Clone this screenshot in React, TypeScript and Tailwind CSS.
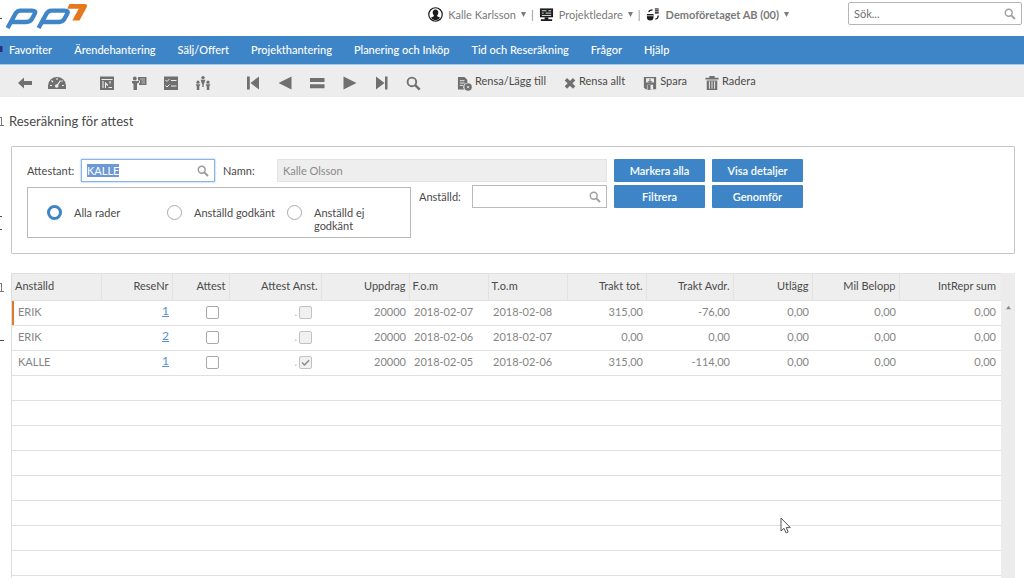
import { useEffect, useRef, useState } from "react";
import type { ReactNode } from "react";

const menu = ["Favoriter", "Ärendehantering", "Sälj/Offert", "Projekthantering", "Planering och Inköp", "Tid och Reseräkning", "Frågor", "Hjälp"];

type Row = { name: string; nr: string; approved: boolean; from: string; to: string; total: string; deduction: string };

const rows: Row[] = [
  { name: "ERIK", nr: "1", approved: false, from: "2018-02-07", to: "2018-02-08", total: "315,00", deduction: "-76,00" },
  { name: "ERIK", nr: "2", approved: false, from: "2018-02-06", to: "2018-02-07", total: "0,00", deduction: "0,00" },
  { name: "KALLE", nr: "1", approved: true, from: "2018-02-05", to: "2018-02-06", total: "315,00", deduction: "-114,00" },
];

const emptyRows = Array.from({ length: 12 }, (_, i) => i);

function Icon({ children, box = 16, className = "size-4" }: { children: ReactNode; box?: number; className?: string }) {
  return (
    <svg viewBox={`0 0 ${box} ${box}`} className={`${className} shrink-0`} fill="currentColor" aria-hidden="true">
      {children}
    </svg>
  );
}

function SearchIcon({ className }: { className: string }) {
  return (
    <Icon className={className}>
      <circle cx="6.3" cy="6.3" r="4.6" fill="none" stroke="currentColor" strokeWidth="2" />
      <path d="M9.8 9.8 14.6 14.6" stroke="currentColor" strokeWidth="2.6" />
    </Icon>
  );
}

function Logo() {
  return (
    <svg viewBox="0 0 84 26" className="h-[26px] w-[84px]" role="img" aria-label="pp7">
      <g fill="none" stroke="#3f85c8" strokeWidth="4.4" strokeLinejoin="round">
        <path d="M2.6 25 10.4 10.8Q12.2 7.6 15.6 7.6H27Q31.5 7.6 29.6 11L27 15.8Q25.2 19 21.6 19H5.6" />
        <path d="M33.6 25 41.4 10.8Q43.2 7.6 46.6 7.6H59.5Q64 7.6 62.1 11L59.5 15.8Q57.7 19 54.1 19H36.6" />
      </g>
      <path d="M64.5 1H79.5Q83 1 81.7 4.2L74.5 17.5H67.3L73.7 5.8H62.2Z" fill="#e5781e" />
    </svg>
  );
}

function ToolButton({ label, children }: { label: string; children: ReactNode }) {
  return (
    <button type="button" aria-label={label} className="flex h-6 w-8 items-center justify-center">
      {children}
    </button>
  );
}

function TextButton({ label, children }: { label: string; children: ReactNode }) {
  return (
    <button type="button" className="flex items-center gap-[3px] whitespace-nowrap">
      {children}
      <span className="pb-[5px] text-[#4a4a4a]">{label}</span>
    </button>
  );
}

function Dropdown({ label, bold, icon }: { label: string; bold?: boolean; icon: ReactNode }) {
  return (
    <button type="button" className="flex items-center gap-[5px] whitespace-nowrap text-[#7a7a7a]">
      <span className="text-[#1c1c1c]">{icon}</span>
      <span className={bold ? "font-bold" : ""}>{label}</span>
      <Icon box={6} className="size-[5px]">
        <path d="M0 0H6L3 6Z" />
      </Icon>
    </button>
  );
}

function ActionButton({ label }: { label: string }) {
  return (
    <button type="button" className="h-[23px] w-[91px] rounded-[1px] bg-[#3e85c7] pb-px font-semibold text-white">
      {label}
    </button>
  );
}

function Tick({ label, disabled, initial }: { label: string; disabled?: boolean; initial?: boolean }) {
  const [checked, setChecked] = useState(Boolean(initial));
  return (
    <span className="inline-grid align-middle">
      <input
        type="checkbox"
        aria-label={label}
        checked={checked}
        disabled={disabled}
        onChange={(e) => setChecked(e.target.checked)}
        className="col-start-1 row-start-1 size-[13px] appearance-none rounded-[2px] border border-[#a9a9a9] bg-white disabled:border-[#c2c2c2] disabled:bg-[#f0f0f0]"
      />
      {checked && (
        <svg viewBox="0 0 13 13" className="pointer-events-none col-start-1 row-start-1 size-[13px]" fill="none" stroke="#8c8c8c" strokeWidth="1.5" aria-hidden="true">
          <path d="M3 6.5 5.5 9 10 4.2" />
        </svg>
      )}
    </span>
  );
}

const th = "border-r border-[#e2e2e2] px-[3px] pb-[3px] font-normal last:border-r-0 last:pr-[5px]";
const td = "pr-[3px] pb-1 text-right last:pr-[5px]";

export default function App() {
  const attestant = useRef<HTMLInputElement>(null);
  const [filter, setFilter] = useState("Alla rader");

  useEffect(() => {
    attestant.current?.focus();
    attestant.current?.select();
  }, []);

  return (
    <div className="relative flex h-screen flex-col overflow-hidden bg-white font-['Lato',sans-serif] text-[11px] leading-[13px] text-[#4a4a4a]">
      <header className="flex h-9 shrink-0 items-start pr-[2px] pl-[5px]">
        <a href="#start" className="mt-[3px]"><Logo /></a>
        <div className="ml-auto flex h-[28px] items-center gap-[5px] text-[#8a8a8a]">
          <Dropdown
            label="Kalle Karlsson"
            icon={
              <Icon className="size-[15px]">
                <circle cx="8" cy="8" r="7.2" fill="none" stroke="currentColor" strokeWidth="1.3" />
                <path d="M8 2.6c2 0 3 1.4 3 3.3 0 1.2-.5 2.3-1.2 2.9v1.1l3.2 1.5A6 6 0 0 1 8 14a6 6 0 0 1-5-2.6l3.2-1.5V8.8C5.5 8.2 5 7.1 5 5.9 5 4 6 2.6 8 2.6Z" />
              </Icon>
            }
          />
          <span>|</span>
          <Dropdown
            label="Projektledare"
            icon={
              <Icon className="size-[15px]">
                <path d="M1 1.5H15V11H1Z" />
                <path d="M6 11H10V13H14V15H2V13H6Z" />
                <path d="M3 4H8M10 4H13M3 6.5H5M7 6.5H13M3 9H13" stroke="#fff" strokeWidth=".9" />
              </Icon>
            }
          />
          <span>|</span>
          <Dropdown
            label="Demoföretaget AB (00)"
            bold
            icon={
              <Icon className="size-[15px]">
                <path d="M9.5 1.5H13.5V7H9.5Z" />
                <path d="M9.5 3H13.5M9.5 5H13.5" stroke="#fff" strokeWidth=".7" />
                <path d="M1 7.5H8V11Q8 14.5 4.5 14.5T1 11Z" />
                <path d="M1 9.3H8" stroke="#fff" strokeWidth=".8" />
                <path d="M3 5.5Q3.5 3 7 3M13 9Q13 12.5 10 13" fill="none" stroke="currentColor" strokeWidth="1.3" />
              </Icon>
            }
          />
        </div>
        <label className="mt-[2px] ml-[59px] flex h-[23px] w-[174px] items-center rounded-[2px] border border-[#b5b5b5] px-[5px]">
          <input type="search" aria-label="Sök" placeholder="Sök..." className="min-w-0 flex-1 outline-none placeholder:text-[#6f6f6f]" />
          <span className="text-[#a0a0a0]"><SearchIcon className="size-3" /></span>
        </label>
      </header>

      <nav className="flex h-[29px] shrink-0 items-center gap-[22px] border-b border-[#a9c7e4] bg-[#3e85c7] pl-[9px] font-medium whitespace-nowrap text-white">
        {menu.map((item) => (
          <a key={item} href="#meny" className="pb-[2px]">{item}</a>
        ))}
      </nav>

      <div className="flex h-8 shrink-0 items-center border-t-3 border-[#e9f0f6] bg-[#ededed] pt-px pl-[9px] text-[#707070]">
        <div className="flex gap-[18px]">
          <div className="flex">
            <ToolButton label="Tillbaka">
              <Icon><path d="M1 8 7 2.5V6H15V10H7V13.5Z" /></Icon>
            </ToolButton>
            <ToolButton label="Översikt">
              <Icon box={18} className="size-[18px]">
                <path d="M0 15V11.5A9 8.5 0 0 1 18 11.5V15Z" />
                <path d="M2 11.5H4M3.5 6.5 5 8M9 4V6M14.5 6.5 13.5 7.5M16 11.5H14" stroke="#ededed" strokeWidth="1.1" />
                <path d="M8.5 12.5 12.5 6.5" stroke="#ededed" strokeWidth="1.3" />
                <circle cx="8.7" cy="12" r="1.8" fill="#ededed" />
              </Icon>
            </ToolButton>
          </div>
          <div className="flex">
            <ToolButton label="Projekt">
              <Icon>
                <path d="M1 1.5H15V15H1Z" />
                <path d="M2.5 4.5H13.5M4 6V13M6.5 13V8L9 10.5M11 6V8.5M9.5 12.5H13" stroke="#ededed" strokeWidth="1.1" fill="none" />
              </Icon>
            </ToolButton>
            <ToolButton label="Presentation">
              <Icon>
                <circle cx="3.8" cy="3.5" r="1.9" />
                <path d="M1 6H8V7.5L6 8.5V15H2.5V9L1 8Z" />
                <path d="M7 2H15.5V10H8V8.5L9 7.5V5.5H7Z" />
                <path d="M9 4H14M10.5 6H14M10.5 8H14" stroke="#ededed" strokeWidth=".6" />
              </Icon>
            </ToolButton>
            <ToolButton label="Checklista">
              <Icon>
                <path d="M1 1.5H15V15H1Z" />
                <path d="M2.5 5 4 6.5 6.5 4M8 5.5H13.5M2.5 10.5 4 12 6.5 9.5M8 11H13.5" stroke="#ededed" strokeWidth="1" fill="none" />
              </Icon>
            </ToolButton>
            <ToolButton label="Resurser">
              <Icon>
                <circle cx="8" cy="2.6" r="1.7" />
                <path d="M5.6 4.8H10.4L9 9H7Z" />
                <circle cx="3" cy="7.2" r="1.6" />
                <path d="M.6 9.3H5.4L4.3 11.5V15H1.8V11.5Z" />
                <circle cx="13" cy="7.2" r="1.6" />
                <path d="M10.6 9.3H15.4L14.3 11.5V15H11.8V11.5ZM7.3 9H8.7V12H7.3Z" />
              </Icon>
            </ToolButton>
          </div>
          <div className="flex">
            <ToolButton label="Första">
              <Icon><path d="M2 1.5H4.8V14.5H2ZM14 1.5V14.5L5.5 8Z" /></Icon>
            </ToolButton>
            <ToolButton label="Föregående">
              <Icon><path d="M14.5 1.5V14.5L1.5 8Z" /></Icon>
            </ToolButton>
            <ToolButton label="Lista">
              <Icon><path d="M1 3H15.5V7H1ZM1 9.2H15.5V13.2H1Z" /></Icon>
            </ToolButton>
            <ToolButton label="Nästa">
              <Icon><path d="M2.5 1.5V14.5L15.5 8Z" /></Icon>
            </ToolButton>
            <ToolButton label="Sista">
              <Icon><path d="M3 1.5V14.5L11.5 8ZM12 1.5H14.5V14.5H12Z" /></Icon>
            </ToolButton>
            <ToolButton label="Sök post"><SearchIcon className="size-[15px]" /></ToolButton>
          </div>
        </div>
        <div className="ml-[28px] flex gap-[18px]">
          <TextButton label="Rensa/Lägg till">
            <Icon className="size-[15px]">
              <path d="M1 1H8L11 4V7.5A4 4 0 0 0 8 14.5H1Z" />
              <path d="M3 5H8M3 7.5H8M3 10H6.5" stroke="#ededed" strokeWidth="1" />
              <circle cx="11.8" cy="11.8" r="4" />
              <path d="M10.5 10.5 13.1 13.1M13.1 10.5 10.5 13.1" stroke="#ededed" strokeWidth=".8" />
            </Icon>
          </TextButton>
          <TextButton label="Rensa allt">
            <Icon className="size-3"><path d="M2.5 3 13.5 14M13.5 3 2.5 14" stroke="currentColor" strokeWidth="4.4" /></Icon>
          </TextButton>
          <TextButton label="Spara">
            <Icon className="size-[14px]">
              <path d="M1 1H15V15H3L1 13Z" />
              <path d="M3.5 2.5H12.5V7.5H3.5ZM4.5 10H11.5V15H4.5Z" fill="#ededed" />
              <path d="M8 3.5V8M5.5 6.5H10.5M5.8 11H8V15H5.8Z" stroke="currentColor" strokeWidth="1.2" />
            </Icon>
          </TextButton>
          <TextButton label="Radera">
            <Icon className="size-[14px]">
              <path d="M5 0H11V2H15.5V4H.5V2H5ZM2 5H14V16H2Z" />
              <path d="M5 6V14.5M8 6V14.5M11 6V14.5" stroke="#ededed" strokeWidth="1.1" />
            </Icon>
          </TextButton>
        </div>
      </div>

      <main className="flex min-h-0 flex-1 flex-col pr-[9px] pl-[11px]">
        <h1 className="mt-[15px] -ml-[2px] text-[13px] leading-[18px]">Reseräkning för attest</h1>

        <form className="mt-4 flex h-[108px] shrink-0 items-start gap-[7px] rounded-[1px] border border-[#c6c6c6] pt-3 pl-[15px]">
          <div className="w-[580px] shrink-0">
            <div className="flex h-[23px] items-center">
              <label htmlFor="attestant" className="w-[54px]">Attestant:</label>
              <span className="flex h-[23px] w-[134px] items-center border border-[#8ab4e6] px-[5px] shadow-[0_0_2px_#8ab4e6]">
                <input id="attestant" ref={attestant} defaultValue="KALLE" className="min-w-0 flex-1 caret-transparent outline-none selection:bg-[#6c98d4] selection:text-white" />
                <span className="text-[#9a9a9a]"><SearchIcon className="size-3" /></span>
              </span>
              <label htmlFor="namn" className="ml-2 w-[54px]">Namn:</label>
              <input id="namn" readOnly value="Kalle Olsson" className="h-[23px] min-w-0 flex-1 border border-[#e2e2e2] bg-[#eeeeee] px-[5px] text-[#8a8a8a] outline-none" />
            </div>
            <div className="mt-[3px] flex items-start">
              <fieldset aria-label="Urval" className="mt-[2px] grid h-[51px] w-[384px] shrink-0 grid-cols-[120px_120px_1fr] border border-[#b9b9b9] pt-[17px] pl-[19px]">
                {["Alla rader", "Anställd godkänt", "Anställd ej godkänt"].map((option) => (
                  <label key={option} className="flex items-start gap-3">
                    <input
                      type="radio"
                      name="urval"
                      checked={filter === option}
                      onChange={() => setFilter(option)}
                      className="size-[15px] shrink-0 appearance-none rounded-full border border-[#a9a9a9] bg-white checked:border-[3px] checked:border-[#3e85c7]"
                    />
                    <span className="mt-px max-w-[84px]">{option}</span>
                  </label>
                ))}
              </fieldset>
              <label htmlFor="anstalld" className="mt-[5px] ml-2 w-[53px] shrink-0">Anställd:</label>
              <span className="flex h-[23px] min-w-0 flex-1 items-center border border-[#b9b9b9] px-[5px]">
                <input id="anstalld" className="min-w-0 flex-1 outline-none" />
                <span className="text-[#a0a0a0]"><SearchIcon className="size-3" /></span>
              </span>
            </div>
          </div>
          <div className="grid grid-cols-[91px_91px] gap-x-[7px] gap-y-[3px]">
            <ActionButton label="Markera alla" />
            <ActionButton label="Visa detaljer" />
            <ActionButton label="Filtrera" />
            <ActionButton label="Genomför" />
          </div>
        </form>

        <section className="mt-[19px] flex min-h-0 flex-1 overflow-hidden border-l border-[#dcdcdc]">
          <table className="min-w-0 flex-1 table-fixed border-collapse self-start">
            <colgroup>
              <col className="w-[89px]" />
              <col className="w-[71px]" />
              <col className="w-[57px]" />
              <col className="w-[92px]" />
              <col className="w-[88px]" />
              <col className="w-[79px]" />
              <col className="w-[79px]" />
              <col className="w-[79px]" />
              <col className="w-[87px]" />
              <col className="w-[79px]" />
              <col className="w-[87px]" />
              <col />
            </colgroup>
            <thead>
              <tr className="h-[27px] border-y border-[#e0e0e0] bg-[#eeeeee]">
                <th className={`${th} text-left`}>Anställd</th>
                <th className={`${th} text-right`}>ReseNr</th>
                <th className={`${th} text-right`}>Attest</th>
                <th className={`${th} text-right`}>Attest Anst.</th>
                <th className={`${th} text-right`}>Uppdrag</th>
                <th className={`${th} text-left`}>F.o.m</th>
                <th className={`${th} text-left`}>T.o.m</th>
                <th className={`${th} text-right`}>Trakt tot.</th>
                <th className={`${th} text-right`}>Trakt Avdr.</th>
                <th className={`${th} text-right`}>Utlägg</th>
                <th className={`${th} text-right`}>Mil Belopp</th>
                <th className={`${th} text-right`}>IntRepr sum</th>
              </tr>
            </thead>
            <tbody className="text-[#858585]">
              {rows.map((row, i) => (
                <tr key={i} className="h-[25px] border-b border-[#e0e0e0]">
                  <td className={i === 0 ? "pb-1 pl-[6px] shadow-[inset_2px_0_#e07b2c]" : "pb-1 pl-[6px]"}>{row.name}</td>
                  <td className={td}><a href="#rese" className="text-xs text-[#5a8fd0] underline">{row.nr}</a></td>
                  <td className="pb-[2px] pl-[34px] text-left"><Tick label={`Attest ${row.name} ${row.nr}`} /></td>
                  <td className="pr-[9px] pb-[2px] text-right">
                    <span className="mr-[2px] text-[#b8b8b8]">.</span>
                    <Tick label={`Attest anställd ${row.name} ${row.nr}`} disabled initial={row.approved} />
                  </td>
                  <td className={td}>20000</td>
                  <td className="pb-1 pl-[5px]">{row.from}</td>
                  <td className="pb-1 pl-[5px]">{row.to}</td>
                  <td className={td}>{row.total}</td>
                  <td className={td}>{row.deduction}</td>
                  <td className={td}>0,00</td>
                  <td className={td}>0,00</td>
                  <td className={td}>0,00</td>
                </tr>
              ))}
              {emptyRows.map((i) => (
                <tr key={i} className="h-[25px] border-b border-[#e0e0e0]">
                  <td colSpan={12} />
                </tr>
              ))}
            </tbody>
          </table>
          <div className="flex w-[14px] shrink-0 flex-col items-center bg-[#ececec] pt-8 text-[#8a8a8a]">
            <Icon box={6} className="size-[5px]"><path d="M0 5 3 1 6 5Z" /></Icon>
          </div>
        </section>
      </main>

      <svg viewBox="0 0 4 350" className="pointer-events-none absolute top-0 left-0 h-[350px] w-1" fill="none" stroke="#4a4a4a" aria-hidden="true">
        <path d="M0 18.5H2M0 216.5H2M0 229.5H2M0 340.5H4" />
        <path d="M0 117.5H2M1.5 117V125M0 125.5H4M0 283.5H2M1.5 283V291M0 291.5H4" stroke="#777" />
        <path d="M0 46H2.5V52H0Z" fill="#27307f" stroke="none" />
      </svg>

      <svg viewBox="0 0 12 18" className="pointer-events-none absolute top-[517px] left-[780px] h-[18px] w-3" aria-hidden="true">
        <path d="M1 1V14L4 11.3 6.2 16 8.2 15 6.2 10.6H10.3Z" fill="#fff" stroke="#555" strokeWidth="1" />
      </svg>
    </div>
  );
}
